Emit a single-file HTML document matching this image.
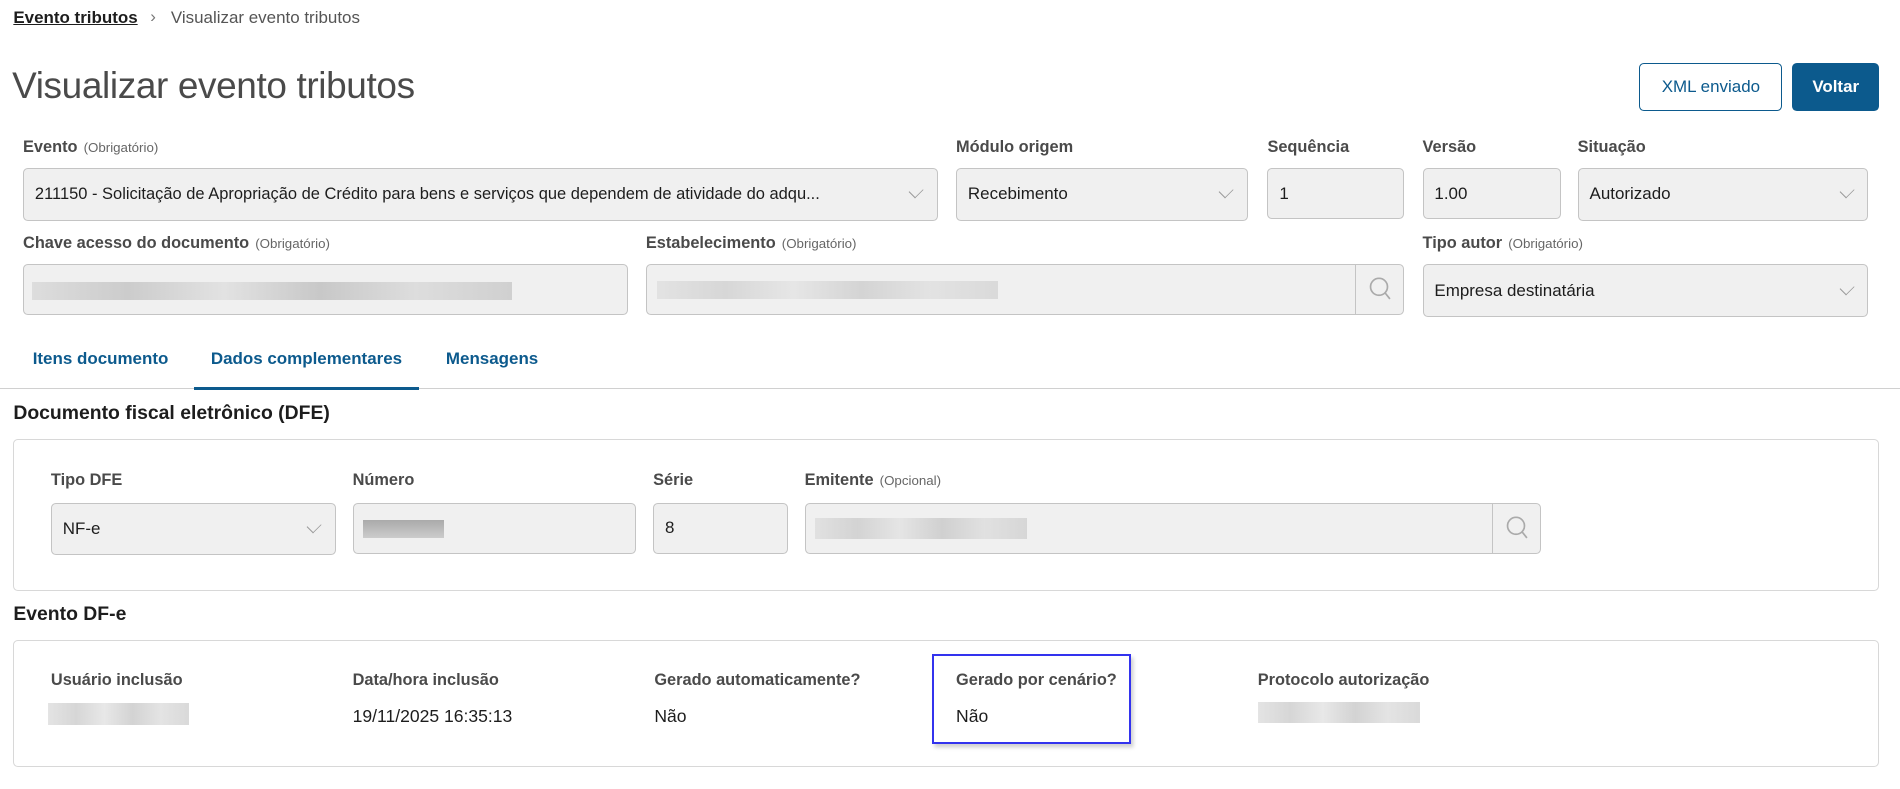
<!DOCTYPE html>
<html><head><meta charset="utf-8"><style>
*{box-sizing:border-box;margin:0;padding:0}
html,body{width:1900px;height:789px;overflow:hidden;background:#fff}
body{font-family:"Liberation Sans",Arial,sans-serif;color:#1d1d1d}
#w{zoom:1.2117;position:relative;width:1568px;height:651px}
.a{position:absolute;white-space:nowrap}
.lbl{font-size:13.5px;font-weight:bold;color:#4a4a4a}
.lbl small{font-weight:normal;font-size:11px;color:#666;margin-left:5px}
.in{position:absolute;background:#f0f0f0;border:1px solid #c4c4c4;border-radius:4px;font-size:14px;color:#1d1d1d;padding-left:9px;display:flex;align-items:center}
.chev{position:absolute;right:12px;top:50%;width:10px;height:10px;border-right:1.3px solid #999;border-bottom:1.3px solid #999;transform:translateY(-75%) rotate(45deg) scaleX(0.75)}
.srch{position:absolute;right:0;top:0;bottom:0;width:40px;border-left:1px solid #c4c4c4}
.blur{position:absolute;background:linear-gradient(90deg,#ddd,#ccc 20%,#e2e2e2 40%,#c8c8c8 60%,#ddd 80%,#d0d0d0)}
.box{position:absolute;left:11px;width:1540px;border:1px solid #d8d8d8;border-radius:4px}
.h2{font-size:16px;font-weight:bold;color:#1d1d1d}
.tab{font-size:14px;font-weight:bold;color:#0c5a8d}
.val{font-size:14.5px;color:#1d1d1d}
</style></head><body><div id="w">
<div class="a" style="left:11px;top:7px;font-size:14px;font-weight:bold;color:#1d1d1d;text-decoration:underline">Evento tributos</div>
<div class="a" style="left:124px;top:6px;font-size:14px;color:#777">›</div>
<div class="a" style="left:141px;top:7px;font-size:14px;color:#555">Visualizar evento tributos</div>
<div class="a" style="left:10px;top:54px;font-size:30.5px;color:#4a4a4a;letter-spacing:-0.3px">Visualizar evento tributos</div>
<div class="a" style="left:1353px;top:52px;width:118px;height:40px;border:1.5px solid #0c5a8d;border-radius:4px;color:#0c5a8d;font-size:14px;display:flex;align-items:center;justify-content:center">XML enviado</div>
<div class="a" style="left:1479px;top:52px;width:72px;height:40px;background:#0c5a8d;border-radius:4px;color:#fff;font-weight:bold;font-size:14px;display:flex;align-items:center;justify-content:center">Voltar</div>

<div class="a lbl" style="left:19px;top:114px">Evento<small>(Obrigatório)</small></div>
<div class="a lbl" style="left:789px;top:114px">Módulo origem</div>
<div class="a lbl" style="left:1046px;top:114px">Sequência</div>
<div class="a lbl" style="left:1174px;top:114px">Versão</div>
<div class="a lbl" style="left:1302px;top:114px">Situação</div>
<div class="in" style="left:19px;top:139px;width:755px;height:43px;font-size:13.6px">211150 - Solicitação de Apropriação de Crédito para bens e serviços que dependem de atividade do adqu...<span class="chev"></span></div>
<div class="in" style="left:789px;top:139px;width:241px;height:43px">Recebimento<span class="chev"></span></div>
<div class="in" style="left:1046px;top:139px;width:113px;height:42px">1</div>
<div class="in" style="left:1174px;top:139px;width:114px;height:42px">1.00</div>
<div class="in" style="left:1302px;top:139px;width:240px;height:43px">Autorizado<span class="chev"></span></div>

<div class="a lbl" style="left:19px;top:193px">Chave acesso do documento<small>(Obrigatório)</small></div>
<div class="a lbl" style="left:533px;top:193px">Estabelecimento<small>(Obrigatório)</small></div>
<div class="a lbl" style="left:1174px;top:193px">Tipo autor<small>(Obrigatório)</small></div>
<div class="in" style="left:19px;top:218px;width:499px;height:42px"><div class="blur" style="left:7px;top:14px;width:396px;height:15px"></div></div>
<div class="in" style="left:533px;top:218px;width:626px;height:42px"><div class="blur" style="left:8px;top:13px;width:282px;height:15px;opacity:.7"></div><div class="srch"><svg width="40" height="40" viewBox="0 0 40 40"><circle cx="19" cy="18" r="7" fill="none" stroke="#aaa" stroke-width="1.4"/><line x1="24" y1="23" x2="28" y2="28" stroke="#aaa" stroke-width="1.4"/></svg></div></div>
<div class="in" style="left:1174px;top:218px;width:368px;height:44px">Empresa destinatária<span class="chev"></span></div>

<div class="a tab" style="left:27px;top:288px">Itens documento</div>
<div class="a tab" style="left:174px;top:288px">Dados complementares</div>
<div class="a tab" style="left:368px;top:288px">Mensagens</div>
<div class="a" style="left:0;top:320px;width:1568px;height:1px;background:#d0d0d0"></div>
<div class="a" style="left:160px;top:319px;width:186px;height:3px;background:#0c5a8d"></div>

<div class="a h2" style="left:11px;top:332px">Documento fiscal eletrônico (DFE)</div>
<div class="box" style="top:362px;height:126px"></div>
<div class="a lbl" style="left:42px;top:389px">Tipo DFE</div>
<div class="a lbl" style="left:291px;top:389px">Número</div>
<div class="a lbl" style="left:539px;top:389px">Série</div>
<div class="a lbl" style="left:664px;top:389px">Emitente<small>(Opcional)</small></div>
<div class="in" style="left:42px;top:415px;width:235px;height:43px">NF-e<span class="chev"></span></div>
<div class="in" style="left:291px;top:415px;width:234px;height:42px"><div class="blur" style="left:8px;top:13px;width:67px;height:15px;background:linear-gradient(#aaa,#ccc)"></div></div>
<div class="in" style="left:539px;top:415px;width:111px;height:42px">8</div>
<div class="in" style="left:664px;top:415px;width:608px;height:42px"><div class="blur" style="left:8px;top:12px;width:175px;height:17px;opacity:.8"></div><div class="srch"><svg width="40" height="40" viewBox="0 0 40 40"><circle cx="19" cy="18" r="7" fill="none" stroke="#aaa" stroke-width="1.4"/><line x1="24" y1="23" x2="28" y2="28" stroke="#aaa" stroke-width="1.4"/></svg></div></div>

<div class="a h2" style="left:11px;top:498px">Evento DF-e</div>
<div class="box" style="top:528px;height:105px"></div>
<div class="a lbl" style="left:42px;top:554px">Usuário inclusão</div>
<div class="a lbl" style="left:291px;top:554px">Data/hora inclusão</div>
<div class="a lbl" style="left:540px;top:554px">Gerado automaticamente?</div>
<div class="a lbl" style="left:789px;top:554px">Gerado por cenário?</div>
<div class="a lbl" style="left:1038px;top:554px">Protocolo autorização</div>
<div class="blur" style="left:40px;top:580px;width:116px;height:18px;opacity:.8"></div>
<div class="a val" style="left:291px;top:583px">19/11/2025 16:35:13</div>
<div class="a val" style="left:540px;top:583px">Não</div>
<div class="a val" style="left:789px;top:583px">Não</div>
<div class="blur" style="left:1038px;top:579px;width:134px;height:18px;opacity:.8"></div>
<div class="a" style="left:769px;top:540px;width:164px;height:74px;border:2px solid #3333ee;box-shadow:2px 3px 3px rgba(0,0,0,.18)"></div>
</div></body></html>
